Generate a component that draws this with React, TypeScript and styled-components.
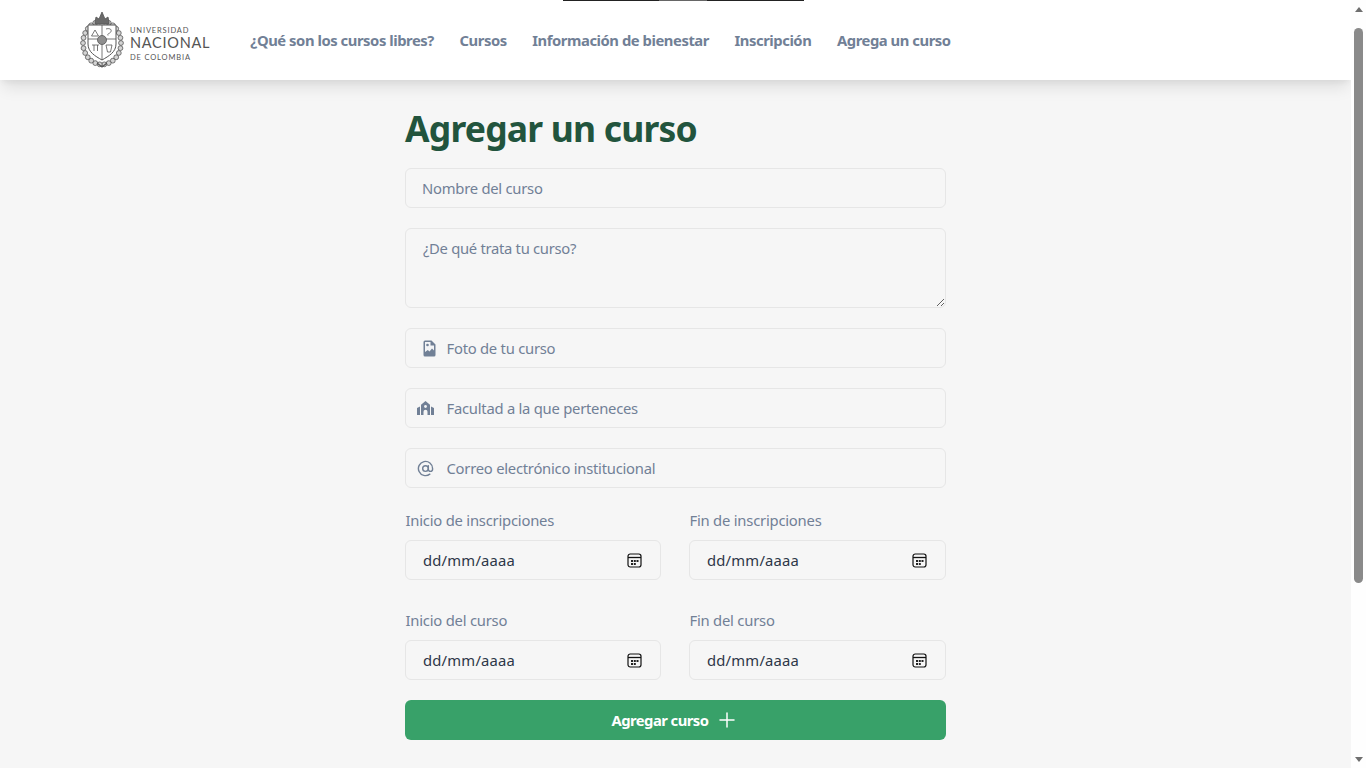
import React from "react";
import styled, { createGlobalStyle } from "styled-components";
import { FiAtSign, FiPlus } from "react-icons/fi";

const GlobalStyle = createGlobalStyle`
  html, body {
    margin: 0;
    height: 100%;
    overflow: hidden;
  }
  body {
    background: #f6f6f6;
    font-family: "Noto Sans", "Open Sans", sans-serif;
    color: #718096;
  }
`;

const Shell = styled.div`
  display: flex;
  height: 768px;
  overflow: hidden;
`;

const Main = styled.main`
  flex: 1;
  min-width: 0;
  overflow: hidden;
  background: #f6f6f6;
`;

const ScrollTrack = styled.div`
  width: 15px;
  flex: none;
  background: #fefefe;
  display: flex;
  flex-direction: column;
  align-items: center;
  padding: 7px 3px 6px 3px;
  box-sizing: border-box;
`;

const ArrowUp = styled.div`
  width: 0;
  height: 0;
  border-left: 4.5px solid transparent;
  border-right: 4.5px solid transparent;
  border-bottom: 5px solid #6f6f6f;
`;

const ArrowDown = styled(ArrowUp)`
  margin-top: auto;
  border-bottom: none;
  border-top: 5px solid #6f6f6f;
`;

const Thumb = styled.div`
  width: 9px;
  height: 555px;
  margin-top: 16px;
  border-radius: 5px;
  background: #8a8a8a;
`;

const Header = styled.header`
  position: relative;
  height: 80px;
  background: #ffffff;
  box-shadow: 0 10px 15px -3px rgba(0, 0, 0, 0.1), 0 4px 6px -2px rgba(0, 0, 0, 0.05);
  display: flex;
  align-items: center;
  padding-left: 80px;
  gap: 40px;
`;

const TopLine = styled.div`
  position: absolute;
  top: 0;
  left: 563px;
  width: 241px;
  height: 1px;
  background: linear-gradient(to right, #222 0 96px, #666 96px 144px, #222 144px);
`;

const Logo = styled.div`
  display: flex;
  align-items: center;
  gap: 6px;
  color: #555555;
`;

const LogoWords = styled.div`
  display: flex;
  flex-direction: column;
  margin-top: 8px;
  font-family: "Lato", sans-serif;
  line-height: 1;
`;

const LogoSmall = styled.span`
  font-size: 7.5px;
  letter-spacing: 0.85px;
`;

const LogoBig = styled.span`
  font-size: 14.5px;
  letter-spacing: 0.75px;
  margin: 2px 0 3px;
`;

const Nav = styled.nav`
  display: flex;
  gap: 25.6px;
`;

const NavLink = styled.a`
  font-size: 14.8px;
  font-weight: 700;
  letter-spacing: -0.45px;
  color: #718096;
  text-decoration: none;
`;

const Form = styled.form`
  width: 541px;
  margin: 0 auto;
  padding-top: 23px;
  display: flex;
  flex-direction: column;
  gap: 20px;
`;

const Title = styled.h1`
  margin: 0;
  font-family: "Noto Sans", sans-serif;
  font-weight: 700;
  font-size: 35.5px;
  letter-spacing: -0.8px;
  line-height: 50px;
  height: 45px;
  color: #22543d;
`;

const Field = styled.div<{ $icon?: boolean }>`
  display: flex;
  align-items: center;
  height: 40px;
  box-sizing: border-box;
  border: 1px solid #e6e6e6;
  border-radius: 6px;
  padding: 0 16px 0 ${(p) => (p.$icon ? "11px" : "16px")};
  gap: 11.5px;
`;

const IconSlot = styled.span<{ $pad?: number }>`
  display: flex;
  box-sizing: border-box;
  width: 18px;
  padding-left: ${(p) => p.$pad ?? 0}px;
  color: #718096;

  svg {
    flex: none;
  }
`;

const TextInput = styled.input`
  flex: 1;
  min-width: 0;
  border: none;
  background: transparent;
  outline: none;
  padding: 0;
  font: inherit;
  font-size: 14.8px;
  letter-spacing: -0.25px;
  color: #1a202c;
  &::placeholder {
    color: #718096;
    opacity: 1;
  }
`;

const Area = styled.textarea`
  height: 80px;
  box-sizing: border-box;
  border: 1px solid #e6e6e6;
  border-radius: 6px;
  padding: 8px 16px 9px 17px;
  background: transparent;
  font: inherit;
  font-size: 14.8px;
  letter-spacing: -0.3px;
  line-height: 22px;
  outline: none;
  &::placeholder {
    color: #718096;
    opacity: 1;
  }
`;

const DateGrid = styled.div`
  display: grid;
  grid-template-columns: 256px 257px;
  column-gap: 28px;
  row-gap: 28px;
`;

const DateCell = styled.div`
  display: flex;
  flex-direction: column;
`;

const DateLabel = styled.label`
  font-size: 14.8px;
  letter-spacing: -0.22px;
  line-height: 25px;
  height: 32px;
  padding-left: 0.5px;
  color: #718096;
`;

const DateBox = styled.div`
  display: flex;
  align-items: center;
  justify-content: space-between;
  height: 40px;
  box-sizing: border-box;
  border: 1px solid #e6e6e6;
  border-radius: 6px;
  padding: 0 18px 0 17px;
  font-size: 14.8px;
  letter-spacing: 0.2px;
  color: #2d3748;
`;

const SubmitButton = styled.button`
  height: 40px;
  border: none;
  border-radius: 6px;
  background: #38a169;
  color: #ffffff;
  font: inherit;
  font-weight: 700;
  font-size: 14.8px;
  letter-spacing: -0.55px;
  display: flex;
  align-items: center;
  justify-content: center;
  gap: 7px;
`;

const CalendarIcon = () => (
  <svg width="15" height="15" viewBox="0 0 15 15" fill="none">
    <rect x="1" y="1" width="13" height="13" rx="2.2" stroke="#111111" strokeWidth="1.2" />
    <path d="M1 4.500h13" stroke="#111111" strokeWidth="1.300" />
    <path d="M4 7h2v2H4zM6.800 7h2v2h-2zM9.500 7h2v2h-2zM4 10h2v2H4zM6.800 10h2v2h-2z" fill="#222222" />
  </svg>
);

const FileImageIcon = () => (
  <svg width="13" height="17" viewBox="0 0 13 17">
    <path d="M2 0.500h6.500l4 4V15a1.500 1.500 0 0 1-1.500 1.500H2A1.500 1.500 0 0 1 .5 15V2A1.500 1.500 0 0 1 2 .5z" fill="#718096" />
    <path d="M2 2h5.500v3.500H11v5L9 8.500 6.500 11.500 4.800 10 2 12z" fill="#f3f4f6" />
    <circle cx="4.500" cy="5" r="1.300" fill="#718096" />
  </svg>
);

const FacultyIcon = () => (
  <svg width="17" height="14" viewBox="0 0 17 14" fill="#718096">
    <path d="M0 7l3-1.500V14H0zM14 5.500L17 7v7h-3z" />
    <path d="M4 14V3.800L8.500 0 13 3.800V14h-2.500v-3.200a2 2 0 0 0-4 0V14z" />
    <circle cx="8.500" cy="5.500" r="1.400" fill="#f3f4f6" />
  </svg>
);

// corona de hojas alrededor del escudo
const LEAVES = Array.from({ length: 26 }, (_, i) => {
  const a = (i / 26) * Math.PI * 2;
  return { x: 22 + Math.cos(a) * 19, y: 31 + Math.sin(a) * 21.5, key: i };
});

const Crest = () => (
  <svg width="44" height="56" viewBox="0 0 44 56" fill="none" stroke="#555555" strokeWidth="0.8">
    {LEAVES.map((l) => (
      <circle key={l.key} cx={l.x} cy={l.y} r="2.400" fill="#d4d4d4" />
    ))}
    <path d="M8 13h28v19c0 8-7 12-14 16-7-4-14-8-14-16z" fill="#fff" strokeWidth="1" />
    <path d="M8 27h28M22 13v35" />
    <circle cx="22" cy="28" r="4.500" fill="#8f8f8f" />
    <path d="M11.500 24l3.500-6 3.500 6zM26 17c3-1 6 0 5 2.500s-4 1.500-3 4" />
    <path d="M12 33h7M14 33v6M17.500 33v6M26 33h6l-1.500 7h-3z" />
    <path d="M15 10l1-5 3 2 3-7 3 7 3-2 1 5v2H15z" fill="#6a6a6a" />
    <path d="M17 51l5 4 5-4" strokeWidth="1.200" />
  </svg>
);

const NAV_ITEMS = ["¿Qué son los cursos libres?", "Cursos", "Información de bienestar", "Inscripción", "Agrega un curso"];

const DATE_FIELDS = ["Inicio de inscripciones", "Fin de inscripciones", "Inicio del curso", "Fin del curso"];

const App: React.FC = () => {
  return (
    <Shell>
      <GlobalStyle />
      <Main>
        <Header>
          <TopLine />
          <Logo>
            <Crest />
            <LogoWords>
              <LogoSmall>UNIVERSIDAD</LogoSmall>
              <LogoBig>NACIONAL</LogoBig>
              <LogoSmall>DE COLOMBIA</LogoSmall>
            </LogoWords>
          </Logo>
          <Nav>
            {NAV_ITEMS.map((item) => (
              <NavLink key={item} href="#">
                {item}
              </NavLink>
            ))}
          </Nav>
        </Header>
        <Form onSubmit={(e) => e.preventDefault()}>
          <Title>Agregar un curso</Title>
          <Field>
            <TextInput placeholder="Nombre del curso" />
          </Field>
          <Area placeholder="¿De qué trata tu curso?" />
          <Field $icon>
            <IconSlot $pad={6}>
              <FileImageIcon />
            </IconSlot>
            <TextInput placeholder="Foto de tu curso" />
          </Field>
          <Field $icon>
            <IconSlot>
              <FacultyIcon />
            </IconSlot>
            <TextInput placeholder="Facultad a la que perteneces" />
          </Field>
          <Field $icon>
            <IconSlot>
              <FiAtSign size={17} />
            </IconSlot>
            <TextInput placeholder="Correo electrónico institucional" />
          </Field>
          <DateGrid>
            {DATE_FIELDS.map((label) => (
              <DateCell key={label}>
                <DateLabel>{label}</DateLabel>
                <DateBox>
                  dd/mm/aaaa
                  <CalendarIcon />
                </DateBox>
              </DateCell>
            ))}
          </DateGrid>
          <SubmitButton type="submit">
            Agregar curso
            <FiPlus size={24} strokeWidth={1.5} />
          </SubmitButton>
        </Form>
      </Main>
      <ScrollTrack>
        <ArrowUp />
        <Thumb />
        <ArrowDown />
      </ScrollTrack>
    </Shell>
  );
};

export default App;
